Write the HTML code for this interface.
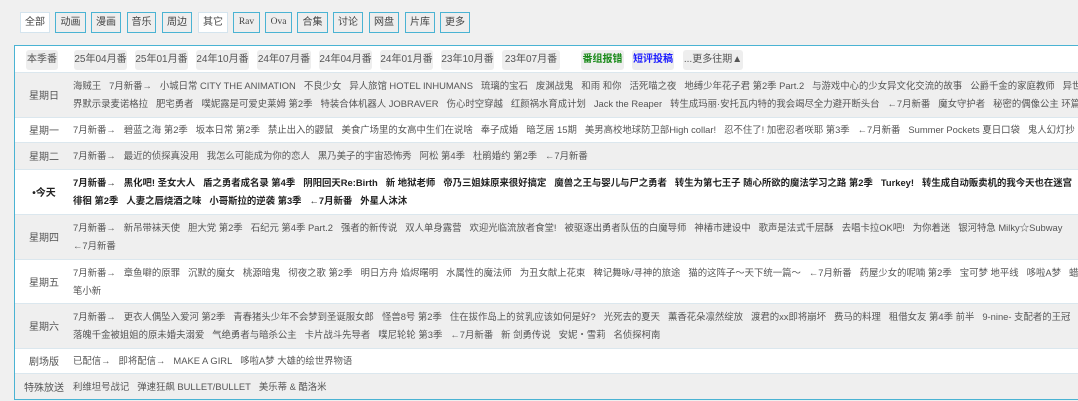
<!DOCTYPE html>
<html><head><meta charset="utf-8">
<style>
*{margin:0;padding:0;box-sizing:border-box}
body{width:1078px;height:401px;overflow:hidden;background:#f0f0f0;font-family:"Liberation Sans","Noto Sans CJK SC",sans-serif;font-size:9.4px;color:#555}
.tabs{position:absolute;top:12px;left:20px;height:21px}
.tabs span{position:absolute;top:0;height:21px;line-height:19px;border:1px solid #4ab3d3;background:#eee;text-align:center;color:#444;font-size:10px}
.tabs span.w{background:#fff;border-color:#d4e4ee}
.tabs span.s{font-family:"Liberation Serif",serif;font-size:9.5px}
.panel{position:absolute;left:14px;top:45px;width:1080px;height:355px;border:1px solid #4ab3d3;border-right:none;background:#fff;overflow:hidden}
.row{position:absolute;left:0;width:1080px;border-top:1px solid #dbe7ee}
.row.g{background:#efefef}
.lab{position:absolute;left:0;width:58px;text-align:center;color:#555;font-size:10px}
.ln{position:absolute;left:58px;white-space:nowrap;height:18px;line-height:18px}
.ln i{font-style:normal;margin-right:8px}
.b .ln,.b .lab{font-weight:bold;color:#222}
.hd span{position:absolute;top:4px;height:20px;line-height:20px;background:#eee;border-radius:3px;text-align:center;color:#555;white-space:nowrap;font-size:10px}
</style></head><body>
<div class="tabs">
<span class="w" style="left:0;width:30px">全部</span>
<span style="left:35px;width:31px">动画</span>
<span style="left:71px;width:30px">漫画</span>
<span style="left:107px;width:29px">音乐</span>
<span style="left:142px;width:30px">周边</span>
<span class="w" style="left:178px;width:30px">其它</span>
<span class="s" style="left:213px;width:27px">Rav</span>
<span class="s" style="left:245px;width:27px">Ova</span>
<span style="left:277px;width:31px">合集</span>
<span style="left:313px;width:30px">讨论</span>
<span style="left:349px;width:30px">网盘</span>
<span style="left:385px;width:30px">片库</span>
<span style="left:420px;width:30px">更多</span>
</div>
<div class="panel">
<div class="row hd" style="top:0;height:26px;border-top:none">
<span style="left:11px;width:32px">本季番</span>
<span style="left:59px;width:53px">25年04月番</span>
<span style="left:120px;width:53px">25年01月番</span>
<span style="left:181px;width:53px">24年10月番</span>
<span style="left:242px;width:54px">24年07月番</span>
<span style="left:304px;width:53px">24年04月番</span>
<span style="left:365px;width:53px">24年01月番</span>
<span style="left:426px;width:53px">23年10月番</span>
<span style="left:487px;width:58px">23年07月番</span>
<span style="left:566px;width:43px;color:#1a8a1a;font-weight:bold">番组报错</span>
<span style="left:617px;width:42px;color:#1a1aff;font-weight:bold">短评投稿</span>
<span style="left:668px;width:60px">...更多往期▲</span>
</div>
<div class="row g" style="top:26px;height:45px">
<div class="lab" style="top:14px">星期日</div>
<div class="ln" style="top:4px"><i>海贼王</i><i>7月新番→</i><i>小城日常 CITY THE ANIMATION</i><i>不良少女</i><i>异人旅馆 HOTEL INHUMANS</i><i>琉璃的宝石</i><i>废渊战鬼</i><i>和雨 和你</i><i>活死喵之夜</i><i>地缚少年花子君 第2季 Part.2</i><i>与游戏中心的少女异文化交流的故事</i><i>公爵千金的家庭教师</i><i>异世</i></div>
<div class="ln" style="top:22px"><i>界默示录麦诺格拉</i><i>肥宅勇者</i><i>噗妮露是可爱史莱姆 第2季</i><i>特装合体机器人 JOBRAVER</i><i>伤心时空穿越</i><i>红颜祸水育成计划</i><i>Jack the Reaper</i><i>转生成玛丽·安托瓦内特的我会竭尽全力避开断头台</i><i>←7月新番</i><i>魔女守护者</i><i>秘密的偶像公主 环篇</i></div>
</div>
<div class="row" style="top:71px;height:25px">
<div class="lab" style="top:4px">星期一</div>
<div class="ln" style="top:3px"><i>7月新番→</i><i>碧蓝之海 第2季</i><i>坂本日常 第2季</i><i>禁止出入的鼹鼠</i><i>美食广场里的女高中生们在说啥</i><i>奉子成婚</i><i>暗芝居 15期</i><i>美男高校地球防卫部High collar!</i><i>忍不住了! 加密忍者咲耶 第3季</i><i>←7月新番</i><i>Summer Pockets 夏日口袋</i><i>鬼人幻灯抄</i></div>
</div>
<div class="row g" style="top:96px;height:27px">
<div class="lab" style="top:5px">星期二</div>
<div class="ln" style="top:4px"><i>7月新番→</i><i>最近的侦探真没用</i><i>我怎么可能成为你的恋人</i><i>黑乃美子的宇宙恐怖秀</i><i>阿松 第4季</i><i>杜鹃婚约 第2季</i><i>←7月新番</i></div>
</div>
<div class="row b" style="top:123px;height:45px">
<div class="lab" style="top:14px">•今天</div>
<div class="ln" style="top:4px"><i>7月新番→</i><i>黑化吧! 圣女大人</i><i>盾之勇者成名录 第4季</i><i>阴阳回天Re:Birth</i><i>新 地狱老师</i><i>帝乃三姐妹原来很好搞定</i><i>魔兽之王与婴儿与尸之勇者</i><i>转生为第七王子 随心所欲的魔法学习之路 第2季</i><i>Turkey!</i><i>转生成自动贩卖机的我今天也在迷宫</i></div>
<div class="ln" style="top:22px"><i>徘徊 第2季</i><i>人妻之唇烧酒之味</i><i>小哥斯拉的逆袭 第3季</i><i>←7月新番</i><i>外星人沐沐</i></div>
</div>
<div class="row g" style="top:168px;height:45px">
<div class="lab" style="top:14px">星期四</div>
<div class="ln" style="top:4px"><i>7月新番→</i><i>新吊带袜天使</i><i>胆大党 第2季</i><i>石纪元 第4季 Part.2</i><i>强者的新传说</i><i>双人单身露营</i><i>欢迎光临流放者食堂!</i><i>被驱逐出勇者队伍的白魔导师</i><i>神椿市建设中</i><i>歌声是法式千层酥</i><i>去唱卡拉OK吧!</i><i>为你着迷</i><i>银河特急 Milky☆Subway</i></div>
<div class="ln" style="top:22px"><i>←7月新番</i></div>
</div>
<div class="row" style="top:213px;height:44px">
<div class="lab" style="top:14px">星期五</div>
<div class="ln" style="top:4px"><i>7月新番→</i><i>章鱼噼的原罪</i><i>沉默的魔女</i><i>桃源暗鬼</i><i>彻夜之歌 第2季</i><i>明日方舟 焰烬曙明</i><i>水属性的魔法师</i><i>为丑女献上花束</i><i>稗记舞咏/寻神的旅途</i><i>猫的这阵子～天下统一篇～</i><i>←7月新番</i><i>药屋少女的呢喃 第2季</i><i>宝可梦 地平线</i><i>哆啦A梦</i><i>蜡</i></div>
<div class="ln" style="top:22px"><i>笔小新</i></div>
</div>
<div class="row g" style="top:257px;height:45px">
<div class="lab" style="top:14px">星期六</div>
<div class="ln" style="top:4px"><i>7月新番→</i><i>更衣人偶坠入爱河 第2季</i><i>青春猪头少年不会梦到圣诞服女郎</i><i>怪兽8号 第2季</i><i>住在拔作岛上的贫乳应该如何是好?</i><i>光死去的夏天</i><i>薰香花朵凛然绽放</i><i>渡君的xx即将崩坏</i><i>费马的料理</i><i>租借女友 第4季 前半</i><i>9-nine- 支配者的王冠</i></div>
<div class="ln" style="top:22px"><i>落魄千金被姐姐的原未婚夫溺爱</i><i>气绝勇者与暗杀公主</i><i>卡片战斗先导者</i><i>噗尼轮轮 第3季</i><i>←7月新番</i><i>新 剑勇传说</i><i>安妮・雪莉</i><i>名侦探柯南</i></div>
</div>
<div class="row" style="top:302px;height:25px">
<div class="lab" style="top:4px">剧场版</div>
<div class="ln" style="top:3px"><i>已配信→</i><i>即将配信→</i><i>MAKE A GIRL</i><i>哆啦A梦 大雄的绘世界物语</i></div>
</div>
<div class="row g" style="top:327px;height:28px">
<div class="lab" style="top:5px">特殊放送</div>
<div class="ln" style="top:4px"><i>利维坦号战记</i><i>弹速狂飙 BULLET/BULLET</i><i>美乐蒂 &amp; 酷洛米</i></div>
</div>
</div>
</body></html>
